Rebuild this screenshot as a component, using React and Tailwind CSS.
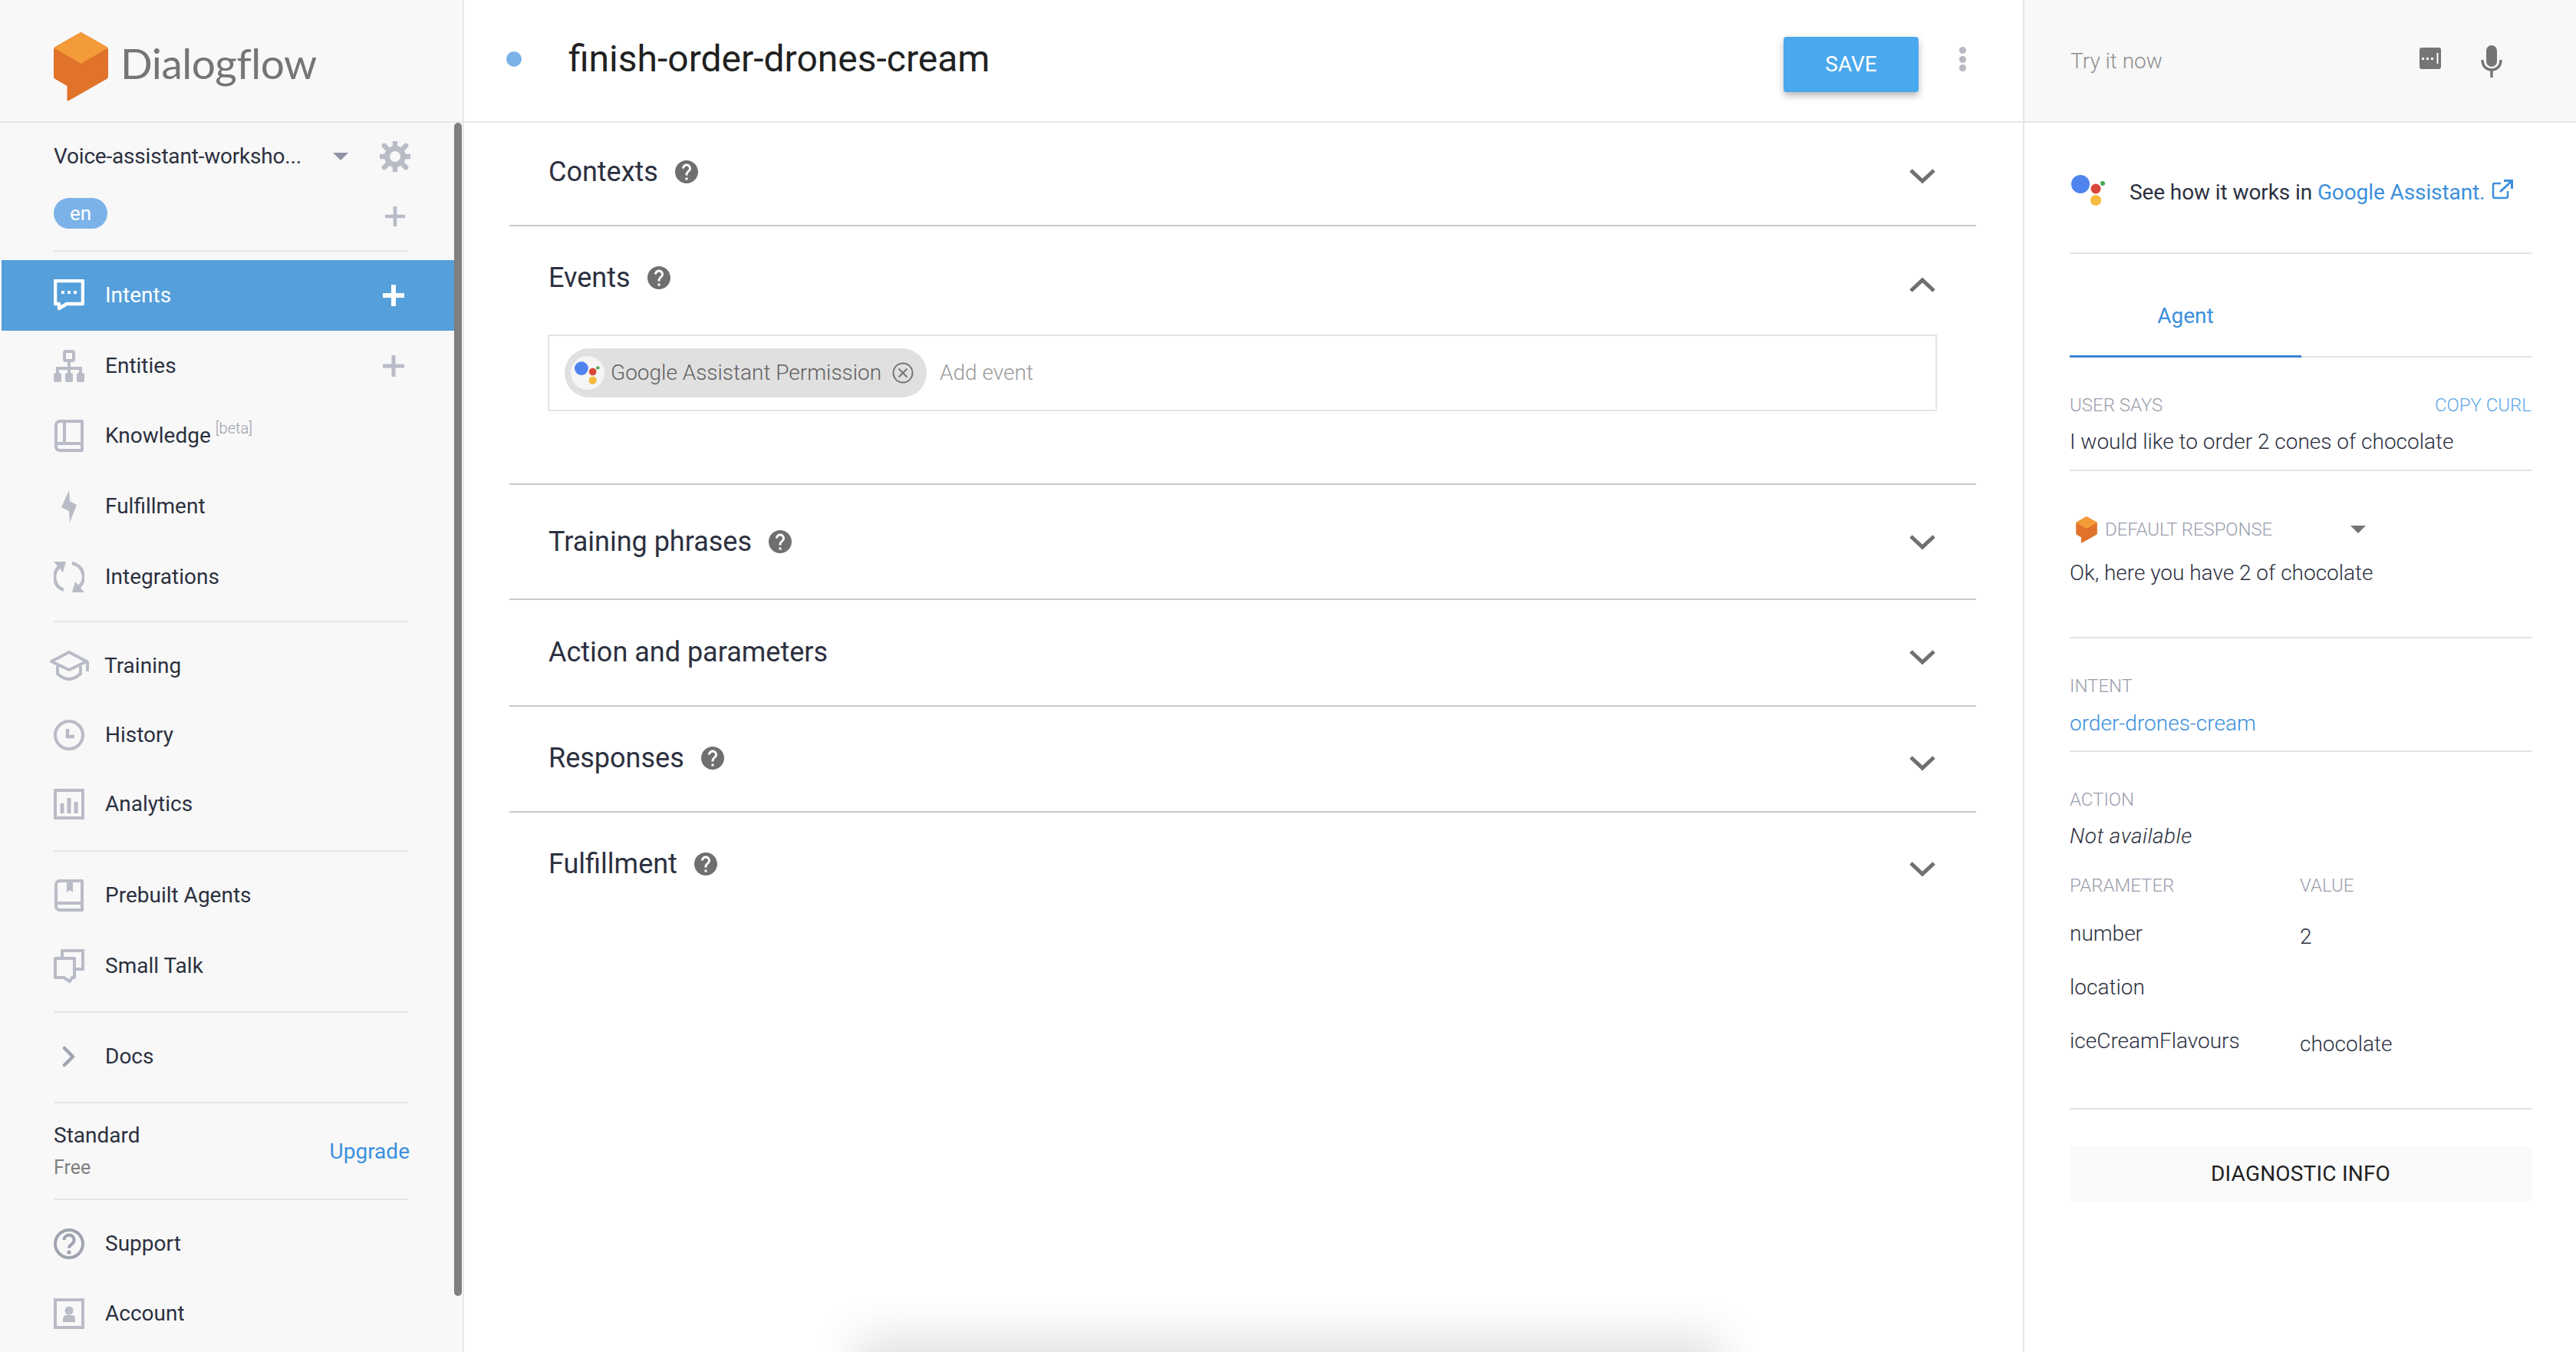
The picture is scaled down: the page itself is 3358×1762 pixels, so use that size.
import React from "react";

const G = "#b9bcc7";

function CubeLogo({ className }) {
  return (
    <svg viewBox="0 0 71 90" className={className}>
      <path d="M35.5 0 L69 19 Q71 20 71 23 L71 58 Q71 60 69 61 L19 89.5 Q17.5 90 17.5 88 L17.5 70 L2 61 Q0 60 0 58 L0 23 Q0 20 2 19 Z" fill="#e0722a" />
      <path d="M33.5 1 Q35.5 0 37.5 1 L69 19 Q71 20 70 21 L35.5 41 L1 21 Q0 20 2 19 Z" fill="#f29b38" />
    </svg>
  );
}

function AssistantLogo({ className }) {
  return (
    <svg viewBox="0 0 46 40" className={className}>
      <circle cx="12" cy="12" r="12" fill="#4f83ee" />
      <circle cx="32" cy="18" r="6.5" fill="#d9473a" />
      <circle cx="32" cy="33" r="7" fill="#f5bb3f" />
      <circle cx="41" cy="11" r="3" fill="#4fa855" />
    </svg>
  );
}

function Plus({ color = G, size = 28, w = 5 }) {
  return (
    <svg width={size} height={size} viewBox="0 0 28 28">
      <path d="M14 0v28M0 14h28" stroke={color} strokeWidth={w} strokeLinecap="round" />
    </svg>
  );
}

const icons = {
  intents: (
    <svg width="40" height="42" viewBox="0 0 40 42" fill="none">
      <path d="M2 2h36v30H17l-10 6v-6H2z" stroke="#fff" strokeWidth="4.5" strokeLinejoin="round" />
      <path d="M10 15h4v4h-4zM18 15h4v4h-4zM26 15h4v4h-4z" fill="#fff" />
    </svg>
  ),
  entities: (
    <svg width="40" height="42" viewBox="0 0 40 42" fill="none">
      <rect x="14" y="2" width="12" height="12" rx="2" stroke={G} strokeWidth="4" />
      <path d="M20 14v10M5 30v-6h30v6M20 24v6" stroke={G} strokeWidth="4" />
      <rect x="0" y="30" width="10" height="12" rx="2.5" fill={G} />
      <rect x="15" y="30" width="10" height="12" rx="2.5" fill={G} />
      <rect x="30" y="30" width="10" height="12" rx="2.5" fill={G} />
    </svg>
  ),
  knowledge: (
    <svg width="40" height="42" viewBox="0 0 40 42" fill="none">
      <path d="M8 2h29v38H8a5 5 0 0 1-5-5V7a5 5 0 0 1 5-5z" stroke={G} strokeWidth="4" strokeLinejoin="round" />
      <path d="M14 3v27M4 31h32" stroke={G} strokeWidth="4" />
    </svg>
  ),
  bolt: (
    <svg width="40" height="42" viewBox="0 0 40 42">
      <path d="M20 0 L21 14 L30 19 L21 42 L20 27 L10 22 Z" fill={G} />
    </svg>
  ),
  sync: (
    <svg width="40" height="42" viewBox="0 0 40 42" fill="none">
      <path d="M8 7A18 18 0 0 0 13 38" stroke={G} strokeWidth="4.5" />
      <path d="M24 3a18 18 0 0 1 9 31" stroke={G} strokeWidth="4.5" />
      <path d="M0 1h16L12 15z" fill={G} />
      <path d="M40 41H24l4-14z" fill={G} />
    </svg>
  ),
  cap: (
    <svg width="54" height="40" viewBox="0 0 54 40" fill="none">
      <path d="M27 2 L50 14 L27 25 L4 14 Z" stroke={G} strokeWidth="4" strokeLinejoin="round" />
      <path d="M12 20v10q15 14 30 0V20" stroke={G} strokeWidth="4" />
      <path d="M51 14v13" stroke={G} strokeWidth="4" />
    </svg>
  ),
  clock: (
    <svg width="40" height="40" viewBox="0 0 40 40" fill="none">
      <circle cx="20" cy="20" r="18" stroke={G} strokeWidth="4" />
      <path d="M18 12v10h9" stroke={G} strokeWidth="4.5" />
    </svg>
  ),
  analytics: (
    <svg width="40" height="40" viewBox="0 0 40 40" fill="none">
      <rect x="2" y="2" width="36" height="36" stroke={G} strokeWidth="4" />
      <path d="M11 19v13M20 12v20M29 17v15" stroke={G} strokeWidth="5" />
    </svg>
  ),
  prebuilt: (
    <svg width="40" height="42" viewBox="0 0 40 42" fill="none">
      <path d="M8 2h29v38H8a5 5 0 0 1-5-5V7a5 5 0 0 1 5-5z" stroke={G} strokeWidth="4" strokeLinejoin="round" />
      <path d="M4 31h32" stroke={G} strokeWidth="4" />
      <path d="M17 3h8v14l-4-3-4 3z" fill={G} />
    </svg>
  ),
  talk: (
    <svg width="40" height="44" viewBox="0 0 40 44" fill="none">
      <path d="M11 10V2h27v24h-9" stroke={G} strokeWidth="4" />
      <path d="M2 12h25v25h-3l-3 5-8-5H2z" stroke={G} strokeWidth="4" strokeLinejoin="round" />
    </svg>
  ),
  chevron: (
    <svg width="40" height="28" viewBox="0 0 40 28" fill="none">
      <path d="M14 3l11 11-11 11" stroke="#a0a4b0" strokeWidth="4.5" strokeLinecap="round" strokeLinejoin="round" />
    </svg>
  ),
  support: (
    <svg width="40" height="40" viewBox="0 0 40 40" fill="none">
      <circle cx="20" cy="20" r="18" stroke="#a0a4b0" strokeWidth="4" />
      <path d="M13.5 15a6.5 6.5 0 1 1 10 5.5c-2.5 1.6-3.5 2.5-3.5 5" stroke="#a0a4b0" strokeWidth="4" />
      <circle cx="20" cy="31" r="2.6" fill="#a0a4b0" />
    </svg>
  ),
  account: (
    <svg width="40" height="40" viewBox="0 0 40 40" fill="none">
      <rect x="2" y="2" width="36" height="36" stroke={G} strokeWidth="4" />
      <circle cx="20" cy="16" r="5.5" fill={G} />
      <path d="M12 31v-4q0-5 5-5h6q5 0 5 5v4z" fill={G} />
    </svg>
  ),
};

function NavRow({ icon, label, className = "", active, plus, textClass = "ml-[27px]", iconClass = "w-[40px]", children }) {
  return (
    <div className={`flex items-center pl-[70px] pr-[76px] ${active ? "bg-[#559fda] text-white" : "text-[#2c3040]"} ${className}`}>
      <span className={`flex justify-center shrink-0 ${iconClass}`}>{icon}</span>
      <span className={`text-[28px] ${textClass}`}>{label}</span>
      {children}
      {plus && (
        <span className="ml-auto">
          <Plus color={active ? "#fff" : G} w={active ? 6 : 5} />
        </span>
      )}
    </div>
  );
}

function Rule({ className = "" }) {
  return <div className={`h-[2px] mx-[70px] w-[462px] bg-[#e6e6e6] ${className}`} />;
}

function Gear() {
  return (
    <svg className="ml-[41px]" width="40" height="40" viewBox="0 0 40 40" fill="none">
      <circle cx="20" cy="20" r="10.5" stroke={G} strokeWidth="7" />
      <path d="M20 0v8M20 32v8M0 20h8M32 20h8M5.9 5.9l5.6 5.6M28.5 28.5l5.6 5.6M34.1 5.9l-5.6 5.6M11.5 28.5l-5.6 5.6" stroke={G} strokeWidth="6.5" strokeLinecap="round" />
    </svg>
  );
}

function Sidebar() {
  return (
    <aside className="relative w-[605px] shrink-0 flex flex-col bg-[#f8f8f8] border-r-2 border-[#e8e8e8] h-full">
      <div className="h-[160px] shrink-0 border-b-2 border-[#e6e6e6] pl-[70px] pt-[42px] flex items-start">
        <CubeLogo className="w-[71px] h-[90px]" />
        <span className="ml-[16px] mt-[6px] text-[55px] leading-[68px] tracking-[-0.5px] text-[#757575] font-['Lato',sans-serif]">Dialogflow</span>
      </div>
      <div className="flex items-center h-[88px] mt-0 pl-[70px] pr-[68px] text-[#2c3040]">
        <span className="text-[28px] w-[364px] shrink-0 whitespace-nowrap tracking-[-0.2px]">Voice-assistant-worksho...</span>
        <span className="w-0 h-0 border-l-[10px] border-r-[10px] border-t-[10px] border-l-transparent border-r-transparent border-t-[#8f93a3]" />
        <Gear />
      </div>
      <div className="flex items-center justify-between h-[58px] pl-[70px] pr-[75px]">
        <span className="w-[70px] h-[40px] mt-[2px] rounded-full bg-[#7bb2e8] text-white text-[26px] leading-[40px] text-center">en</span>
        <span className="mt-[10px] flex"><Plus size={26} /></span>
      </div>
      <Rule className="mt-[20px]" />
      <div className="h-[11px] shrink-0" />
      <NavRow active plus icon={icons.intents} label="Intents" className="h-[92px] ml-[2px] mr-[11px] !pl-[68px] !pr-[65px]" />
      <NavRow plus icon={icons.entities} label="Entities" className="h-[91px]" />
      <NavRow icon={icons.knowledge} label="Knowledge" className="h-[92px]">
        <span className="ml-[6px] -mt-[20px] text-[20px] font-light text-[#9a9eac]">[beta]</span>
      </NavRow>
      <NavRow icon={icons.bolt} label="Fulfillment" className="h-[92px]" />
      <NavRow icon={icons.sync} label="Integrations" className="h-[92px]" />
      <Rule className="mt-[11px]" />
      <NavRow icon={icons.cap} label="Training" className="h-[90px] mt-[12px] !pl-[63px]" iconClass="w-[54px]" textClass="ml-[19px]" />
      <NavRow icon={icons.clock} label="History" className="h-[90px]" />
      <NavRow icon={icons.analytics} label="Analytics" className="h-[90px]" />
      <Rule className="mt-[15px]" />
      <NavRow icon={icons.prebuilt} label="Prebuilt Agents" className="h-[92px] mt-[11px]" />
      <NavRow icon={icons.talk} label="Small Talk" className="h-[92px]" />
      <Rule className="mt-[13px]" />
      <NavRow icon={icons.chevron} label="Docs" className="h-[92px] mt-[11px]" />
      <Rule className="mt-[13px]" />
      <div className="flex items-center justify-between h-[124px] pl-[70px] pr-[67px]">
        <div className="flex flex-col mt-[2px]">
          <span className="text-[28px] leading-[36px] text-[#2c3040]">Standard</span>
          <span className="mt-[6px] text-[25px] leading-[36px] text-[#808080]">Free</span>
        </div>
        <span className="text-[28px] text-[#3c8fdd] mt-[2px] mr-[2px]">Upgrade</span>
      </div>
      <Rule />
      <NavRow icon={icons.support} label="Support" className="h-[90px] mt-[12px]" />
      <NavRow icon={icons.account} label="Account" className="h-[92px]" />
      <div className="absolute left-[592px] top-[160px] w-[10px] h-[1529px] rounded-[5px] bg-[#7f7f7f]" />
    </aside>
  );
}

function Help() {
  return (
    <svg className="ml-[19px]" width="36" height="36" viewBox="0 0 24 24" fill="#6f6f6f">
      <path d="M12 2C6.48 2 2 6.48 2 12s4.48 10 10 10 10-4.48 10-10S17.52 2 12 2zm1 17h-2v-2h2v2zm2.07-7.75l-.9.92C13.45 12.9 13 13.5 13 15h-2v-.5c0-1.1.45-2.1 1.17-2.83l1.24-1.26c.37-.36.59-.86.59-1.41 0-1.1-.9-2-2-2s-2 .9-2 2H8c0-2.21 1.79-4 4-4s4 1.79 4 4c0 .88-.36 1.68-.93 2.25z" />
    </svg>
  );
}

function Chevron({ up, className = "" }) {
  return (
    <svg className={className} width="34" height="20" viewBox="0 0 34 20" fill="none">
      <path d={up ? "M2 18L17 4l15 14" : "M2 2l15 14L32 2"} stroke="#707070" strokeWidth="5" />
    </svg>
  );
}

function Section({ title, help = true, h, total, chev, up, last, children }) {
  return (
    <div className={`shrink-0 ${last ? "" : "border-b-2 border-[#cbc9c9]"}`} style={{ height: total }}>
      <div className="flex items-center justify-between pl-[52px] pr-[53px]" style={{ height: h }}>
        <div className="flex items-center text-[36px] text-[#2c3040]">
          <span className="-ml-[1px]">{title}</span>
          {help && <Help />}
        </div>
        <span className="flex" style={{ marginTop: chev * 2 }}>
          <Chevron up={up} />
        </span>
      </div>
      {children}
    </div>
  );
}

function Main() {
  return (
    <main className="relative flex-1 min-w-0 flex flex-col h-full border-r-2 border-[#e6e6e6] overflow-hidden">
      <div className="h-[160px] shrink-0 border-b-2 border-[#e6e6e6] flex items-center pl-[55px] pr-[74px]">
        <span className="w-[20px] h-[20px] mt-[-4px] rounded-full bg-[#7bb2e8] shrink-0" />
        <span className="ml-[61px] mt-[-4px] text-[48px] text-[#212121] [font-feature-settings:'liga','dlig']">finish-order-drones-cream</span>
        <button className="ml-auto w-[176px] h-[72px] mt-[10px] rounded-[4px] bg-[#4aa8ee] text-white text-[28px] shadow-[0_5px_10px_rgba(0,0,0,0.28)]">SAVE</button>
        <span className="ml-[53px] mt-[-4px] flex flex-col gap-[2.5px]">
          <i className="block w-[9px] h-[9px] rounded-full bg-[#b8b9c3]" />
          <i className="block w-[9px] h-[9px] rounded-full bg-[#b8b9c3]" />
          <i className="block w-[9px] h-[9px] rounded-full bg-[#b8b9c3]" />
        </span>
      </div>
      <div className="ml-[59px] mr-[61px] flex flex-col">
        <Section title="Contexts" h={128} total={135} chev={6} />
        <Section title="Events" h={134} total={337} chev={9} up>
          <div className="mt-[7px] ml-[50px] mr-[51px] h-[100px] border-2 border-[#e4e4e4] flex items-center pl-[20px]">
            <div className="flex items-center h-[64px] w-[472px] rounded-full bg-[#e0e0e0] pl-[8px]">
              <span className="w-[44px] h-[44px] rounded-full bg-[#f5f5f5] flex items-center justify-center shrink-0">
                <AssistantLogo className="w-[34px] h-[30px]" />
              </span>
              <span className="ml-[8px] text-[28px] text-[#616161] whitespace-nowrap font-light">Google Assistant Permission</span>
              <svg className="ml-[14px]" width="28" height="28" viewBox="0 0 28 28" fill="none">
                <circle cx="14" cy="14" r="12.5" stroke="#757575" strokeWidth="2" />
                <path d="M8.5 8.5l11 11M19.5 8.5l-11 11" stroke="#757575" strokeWidth="2" />
              </svg>
            </div>
            <span className="ml-[17px] text-[28px] font-light text-[#999]">Add event</span>
          </div>
        </Section>
        <Section title="Training phrases" h={148} total={150} chev={1} />
        <Section title="Action and parameters" help={false} h={136} total={139} chev={7} />
        <Section title="Responses" h={134} total={138} chev={7} />
        <Section title="Fulfillment" h={134} total={134} chev={7} last />
      </div>
      <div className="absolute left-[530px] bottom-[-60px] w-[1090px] h-[60px] shadow-[0_0_60px_20px_rgba(0,0,0,0.12)]" />
    </main>
  );
}

const Label = ({ className = "", children }) => (
  <div className={`text-[24px] leading-[30px] font-light text-[#9a9eac] ${className}`}>{children}</div>
);
const Body = ({ className = "", children }) => (
  <div className={`text-[28px] leading-[36px] font-light text-[#2c3040] ${className}`}>{children}</div>
);
const Line = ({ className = "" }) => <div className={`h-[2px] bg-[#e2e2e2] ${className}`} />;

function Right() {
  return (
    <aside className="w-[719px] shrink-0 h-full flex flex-col">
      <div className="h-[160px] shrink-0 bg-[#f8f8f8] border-b-2 border-[#e6e6e6] flex items-center pl-[60px] pr-[96px]">
        <span className="text-[28px] font-light text-[#8e8e8e] mt-[2px]">Try it now</span>
        <svg className="ml-auto -mt-[6px]" width="28" height="28" viewBox="0 0 28 28">
          <rect width="28" height="28" rx="3" fill="#757575" />
          <path d="M3 13h3v3H3zM9 13h3v3H9zM15 13h3v3h-3zM22.5 7h2v14h-2z" fill="#fff" />
        </svg>
        <svg className="ml-[52px] mt-[2px]" width="28" height="42" viewBox="0 0 28 42" fill="none">
          <rect x="7" y="0" width="14" height="28" rx="7" fill="#757575" />
          <path d="M2 19c0 8 5 13 12 13s12-5 12-13M14 32v10" stroke="#757575" strokeWidth="3.5" />
        </svg>
      </div>
      <div className="ml-[59px] mr-[58px] flex flex-col">
        <div className="h-[171px] shrink-0 border-b-2 border-[#e2e2e2] flex items-center pt-[11px]">
          <AssistantLogo className="ml-[2px] w-[46px] h-[40px] mt-[-4px]" />
          <span className="ml-[30px] text-[28px] mt-[1px] text-[#2c3040] whitespace-nowrap tracking-[-0.1px]">
            See how it works in <span className="text-[#3c8fdd]">Google Assistant.</span>
          </span>
          <svg className="ml-[9px] -mt-[6px]" width="28" height="26" viewBox="0 0 28 26" fill="none">
            <path d="M12 5H4a2 2 0 0 0-2 2v15a2 2 0 0 0 2 2h15a2 2 0 0 0 2-2v-7" stroke="#3c8fdd" strokeWidth="2.5" />
            <path d="M11 16L25 3M16 1.5h10.5V12" stroke="#3c8fdd" strokeWidth="3" />
          </svg>
        </div>
        <div className="h-[135px] shrink-0 border-b-2 border-[#e2e2e2] relative flex">
          <div className="w-[302px] h-[135px] -mb-[2px] border-b-[3px] border-[#3c86d6] flex items-center justify-center text-[28px] text-[#3c8fdd] pt-[30px]">Agent</div>
        </div>
        <div className="flex items-center justify-between mt-[47px]">
          <Label>USER SAYS</Label>
          <Label className="!text-[#5fa8e6]">COPY CURL</Label>
        </div>
        <Body className="mt-[15px]">I would like to order 2 cones of chocolate</Body>
        <Line className="mt-[18px]" />
        <div className="flex items-center mt-[59px] h-[34px] pl-[8px]">
          <CubeLogo className="w-[28px] h-[35px]" />
          <Label className="ml-[10px] w-[320px] tracking-[-0.1px]">DEFAULT RESPONSE</Label>
          <span className="w-0 h-0 border-l-[10px] border-r-[10px] border-t-[10px] border-l-transparent border-r-transparent border-t-[#757575]" />
        </div>
        <Body className="mt-[22px]">Ok, here you have 2 of chocolate</Body>
        <Line className="mt-[65px]" />
        <Label className="mt-[47px]">INTENT</Label>
        <Body className="mt-[16px] !text-[#3c8fdd]">order-drones-cream</Body>
        <Line className="mt-[17px]" />
        <Label className="mt-[47px]">ACTION</Label>
        <Body className="mt-[15px] italic tracking-[0.45px]">Not available</Body>
        <div className="grid grid-cols-[300px_1fr] mt-[31px]">
          <Label>PARAMETER</Label>
          <Label>VALUE</Label>
        </div>
        <div className="grid grid-cols-[300px_1fr] auto-rows-[70px] mt-[30px]">
          <Body>number</Body>
          <Body className="mt-[4px]">2</Body>
          <Body>location</Body>
          <Body className="mt-[4px]" />
          <Body>iceCreamFlavours</Body>
          <Body className="mt-[4px]">chocolate</Body>
        </div>
        <Line className="mt-[35px]" />
        <button className="mt-[48px] h-[72px] bg-[#fafafa] text-[28px] text-[#212121] tracking-[0.2px]">DIAGNOSTIC INFO</button>
      </div>
    </aside>
  );
}

export default function App() {
  return (
    <div className="w-[3358px] h-[1762px] flex overflow-hidden bg-white font-['Roboto',sans-serif]">
      <Sidebar />
      <Main />
      <Right />
    </div>
  );
}
